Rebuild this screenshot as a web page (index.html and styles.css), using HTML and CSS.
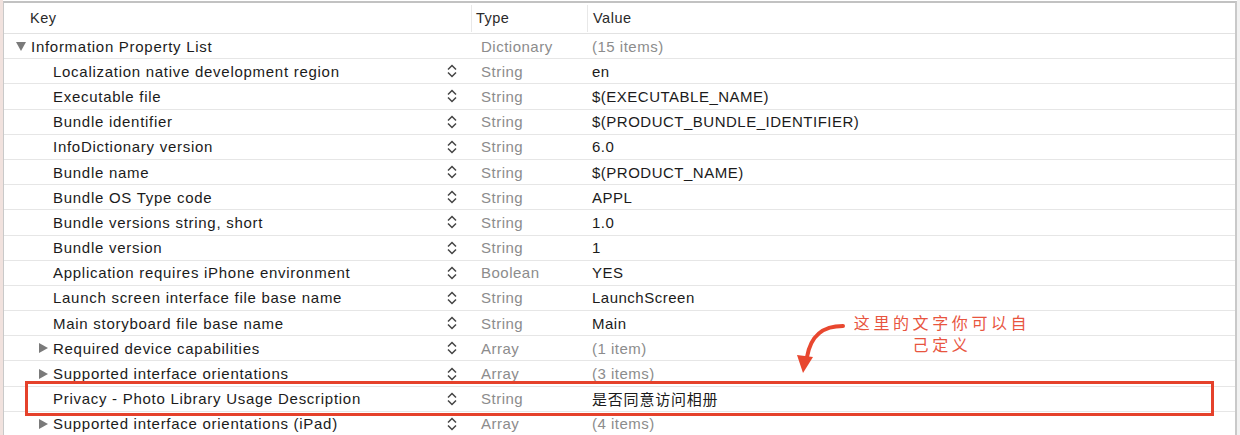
FILE: index.html
```html
<!DOCTYPE html>
<html>
<head>
<meta charset="utf-8">
<link rel="stylesheet" href="styles.css">
</head>
<body>
<div class="frame">
  <div class="strip"></div>
  <div class="table">
    <div class="head">
      <div class="hcell hkey">Key</div>
      <div class="hcell htype">Type</div>
      <div class="hcell hval">Value</div>
    </div>
    <div class="row">
      <div class="key lvl0"><span class="tri down"></span><span class="ktext">Information Property List</span></div>
      <div class="type">Dictionary</div>
      <div class="val dim">(15 items)</div>
    </div>
    <div class="row">
      <div class="key lvl1"><span class="tri none"></span><span class="ktext">Localization native development region</span><span class="step"><svg viewBox="0 0 12 16" width="12" height="16"><path d="M2 6.5 L6 2.5 L10 6.5 M2 9.5 L6 13.5 L10 9.5"/></svg></span></div>
      <div class="type">String</div>
      <div class="val">en</div>
    </div>
    <div class="row">
      <div class="key lvl1"><span class="tri none"></span><span class="ktext">Executable file</span><span class="step"><svg viewBox="0 0 12 16" width="12" height="16"><path d="M2 6.5 L6 2.5 L10 6.5 M2 9.5 L6 13.5 L10 9.5"/></svg></span></div>
      <div class="type">String</div>
      <div class="val">$(EXECUTABLE_NAME)</div>
    </div>
    <div class="row">
      <div class="key lvl1"><span class="tri none"></span><span class="ktext">Bundle identifier</span><span class="step"><svg viewBox="0 0 12 16" width="12" height="16"><path d="M2 6.5 L6 2.5 L10 6.5 M2 9.5 L6 13.5 L10 9.5"/></svg></span></div>
      <div class="type">String</div>
      <div class="val">$(PRODUCT_BUNDLE_IDENTIFIER)</div>
    </div>
    <div class="row">
      <div class="key lvl1"><span class="tri none"></span><span class="ktext">InfoDictionary version</span><span class="step"><svg viewBox="0 0 12 16" width="12" height="16"><path d="M2 6.5 L6 2.5 L10 6.5 M2 9.5 L6 13.5 L10 9.5"/></svg></span></div>
      <div class="type">String</div>
      <div class="val">6.0</div>
    </div>
    <div class="row">
      <div class="key lvl1"><span class="tri none"></span><span class="ktext">Bundle name</span><span class="step"><svg viewBox="0 0 12 16" width="12" height="16"><path d="M2 6.5 L6 2.5 L10 6.5 M2 9.5 L6 13.5 L10 9.5"/></svg></span></div>
      <div class="type">String</div>
      <div class="val">$(PRODUCT_NAME)</div>
    </div>
    <div class="row">
      <div class="key lvl1"><span class="tri none"></span><span class="ktext">Bundle OS Type code</span><span class="step"><svg viewBox="0 0 12 16" width="12" height="16"><path d="M2 6.5 L6 2.5 L10 6.5 M2 9.5 L6 13.5 L10 9.5"/></svg></span></div>
      <div class="type">String</div>
      <div class="val">APPL</div>
    </div>
    <div class="row">
      <div class="key lvl1"><span class="tri none"></span><span class="ktext">Bundle versions string, short</span><span class="step"><svg viewBox="0 0 12 16" width="12" height="16"><path d="M2 6.5 L6 2.5 L10 6.5 M2 9.5 L6 13.5 L10 9.5"/></svg></span></div>
      <div class="type">String</div>
      <div class="val">1.0</div>
    </div>
    <div class="row">
      <div class="key lvl1"><span class="tri none"></span><span class="ktext">Bundle version</span><span class="step"><svg viewBox="0 0 12 16" width="12" height="16"><path d="M2 6.5 L6 2.5 L10 6.5 M2 9.5 L6 13.5 L10 9.5"/></svg></span></div>
      <div class="type">String</div>
      <div class="val">1</div>
    </div>
    <div class="row">
      <div class="key lvl1"><span class="tri none"></span><span class="ktext">Application requires iPhone environment</span><span class="step"><svg viewBox="0 0 12 16" width="12" height="16"><path d="M2 6.5 L6 2.5 L10 6.5 M2 9.5 L6 13.5 L10 9.5"/></svg></span></div>
      <div class="type">Boolean</div>
      <div class="val">YES</div>
    </div>
    <div class="row">
      <div class="key lvl1"><span class="tri none"></span><span class="ktext">Launch screen interface file base name</span><span class="step"><svg viewBox="0 0 12 16" width="12" height="16"><path d="M2 6.5 L6 2.5 L10 6.5 M2 9.5 L6 13.5 L10 9.5"/></svg></span></div>
      <div class="type">String</div>
      <div class="val">LaunchScreen</div>
    </div>
    <div class="row">
      <div class="key lvl1"><span class="tri none"></span><span class="ktext">Main storyboard file base name</span><span class="step"><svg viewBox="0 0 12 16" width="12" height="16"><path d="M2 6.5 L6 2.5 L10 6.5 M2 9.5 L6 13.5 L10 9.5"/></svg></span></div>
      <div class="type">String</div>
      <div class="val">Main</div>
    </div>
    <div class="row">
      <div class="key lvl1"><span class="tri right"></span><span class="ktext">Required device capabilities</span><span class="step"><svg viewBox="0 0 12 16" width="12" height="16"><path d="M2 6.5 L6 2.5 L10 6.5 M2 9.5 L6 13.5 L10 9.5"/></svg></span></div>
      <div class="type">Array</div>
      <div class="val dim">(1 item)</div>
    </div>
    <div class="row">
      <div class="key lvl1"><span class="tri right"></span><span class="ktext">Supported interface orientations</span><span class="step"><svg viewBox="0 0 12 16" width="12" height="16"><path d="M2 6.5 L6 2.5 L10 6.5 M2 9.5 L6 13.5 L10 9.5"/></svg></span></div>
      <div class="type">Array</div>
      <div class="val dim">(3 items)</div>
    </div>
    <div class="row">
      <div class="key lvl1"><span class="tri none"></span><span class="ktext">Privacy - Photo Library Usage Description</span><span class="step"><svg viewBox="0 0 12 16" width="12" height="16"><path d="M2 6.5 L6 2.5 L10 6.5 M2 9.5 L6 13.5 L10 9.5"/></svg></span></div>
      <div class="type">String</div>
      <div class="val cjk">是否同意访问相册</div>
    </div>
    <div class="row">
      <div class="key lvl1"><span class="tri right"></span><span class="ktext">Supported interface orientations (iPad)</span><span class="step"><svg viewBox="0 0 12 16" width="12" height="16"><path d="M2 6.5 L6 2.5 L10 6.5 M2 9.5 L6 13.5 L10 9.5"/></svg></span></div>
      <div class="type">Array</div>
      <div class="val dim">(4 items)</div>
    </div>
  </div>
  <div class="side"></div>

  <div class="highlight"></div>
  <div class="note"><div class="nline">这里的文字你可以自</div><div class="nline">己定义</div></div>
  <svg class="arrow" width="60" height="60" viewBox="0 0 60 60">
    <path d="M51 7 C32 7 19 15 15 38" fill="none" stroke="#e8472f" stroke-width="4" stroke-linecap="round"/>
    <polygon points="5,36 21,38 11,54" fill="#e8472f"/>
  </svg>
</div>
</body>
</html>
```

FILE: styles.css
```css
html, body {
  margin: 0;
  padding: 0;
  background: #ffffff;
}
body {
  font-family: "Liberation Sans", Arial, sans-serif;
  font-size: 15px;
  letter-spacing: 0.5px;
  color: #1b1b1b;
}
.frame {
  position: relative;
  display: flex;
  width: 1240px;
  height: 435px;
  overflow: hidden;
}
.strip {
  width: 3px;
  flex: none;
  background: #f1e2de;
}
.table {
  width: 1231px;
  flex: none;
  border-left: 1px solid #c9c9c9;
  border-top: 2px solid #c2c2c2;
  border-right: 2px solid #c9c9c9;
  margin-top: 1px;
  background: #fff;
}
.side {
  flex: 1;
  background: #f2f2f2;
}
.head {
  display: grid;
  grid-template-columns: 467px 116px 1fr;
  height: 31px;
  border-bottom: 1px solid #e2e2e2;
  box-sizing: border-box;
  align-items: center;
}
.hcell {
  height: 27px;
  display: flex;
  align-items: center;
  color: #2a2a2a;
  font-size: 14.5px;
}
.hkey { padding-left: 26px; }
.htype { border-left: 1px solid #e8e8e8; padding-left: 4px; }
.hval { border-left: 1px solid #e8e8e8; padding-left: 5px; }

.row {
  display: grid;
  grid-template-columns: 467px 116px 1fr;
  height: 25.2px;
  border-bottom: 1px solid #e6e6e6;
  box-sizing: border-box;
  align-items: center;
}
.key {
  display: flex;
  align-items: center;
  height: 100%;
}
.lvl0 { padding-left: 12px; }
.lvl1 { padding-left: 34px; }
.tri {
  width: 15px;
  height: 12px;
  flex: none;
  position: relative;
}
.tri.down::before {
  content: "";
  position: absolute;
  left: 0;
  top: 2px;
  border-left: 5.5px solid transparent;
  border-right: 5.5px solid transparent;
  border-top: 9px solid #7a7a7a;
}
.tri.right::before {
  content: "";
  position: absolute;
  left: 1px;
  top: 1px;
  border-top: 5.5px solid transparent;
  border-bottom: 5.5px solid transparent;
  border-left: 9px solid #7a7a7a;
}
.ktext {
  flex: 1;
  white-space: nowrap;
  letter-spacing: 0.72px;
}
.step {
  width: 12px;
  margin-right: 13px;
  display: flex;
  align-items: center;
  justify-content: center;
}
.step svg path {
  fill: none;
  stroke: #444;
  stroke-width: 1.5;
}
.type {
  color: #8c8c8c;
  padding-left: 10px;
}
.val {
  padding-left: 5px;
  white-space: nowrap;
}
.val.dim { color: #8c8c8c; }
.cjk {
  font-family: "Liberation Sans", "Noto Sans CJK SC", sans-serif;
  letter-spacing: 0.8px;
}

.highlight {
  position: absolute;
  left: 25px;
  top: 381px;
  width: 1183px;
  height: 29px;
  border: 3px solid #e5412b;
}
.note {
  position: absolute;
  left: 846px;
  top: 311px;
  width: 192px;
  text-align: center;
  color: #e8553f;
  font-family: "Noto Sans CJK SC", sans-serif;
  font-size: 16px;
  letter-spacing: 3.6px;
  line-height: 22px;
}
.nline {
  height: 22px;
  white-space: nowrap;
}
.arrow {
  position: absolute;
  left: 792px;
  top: 319px;
}
```
